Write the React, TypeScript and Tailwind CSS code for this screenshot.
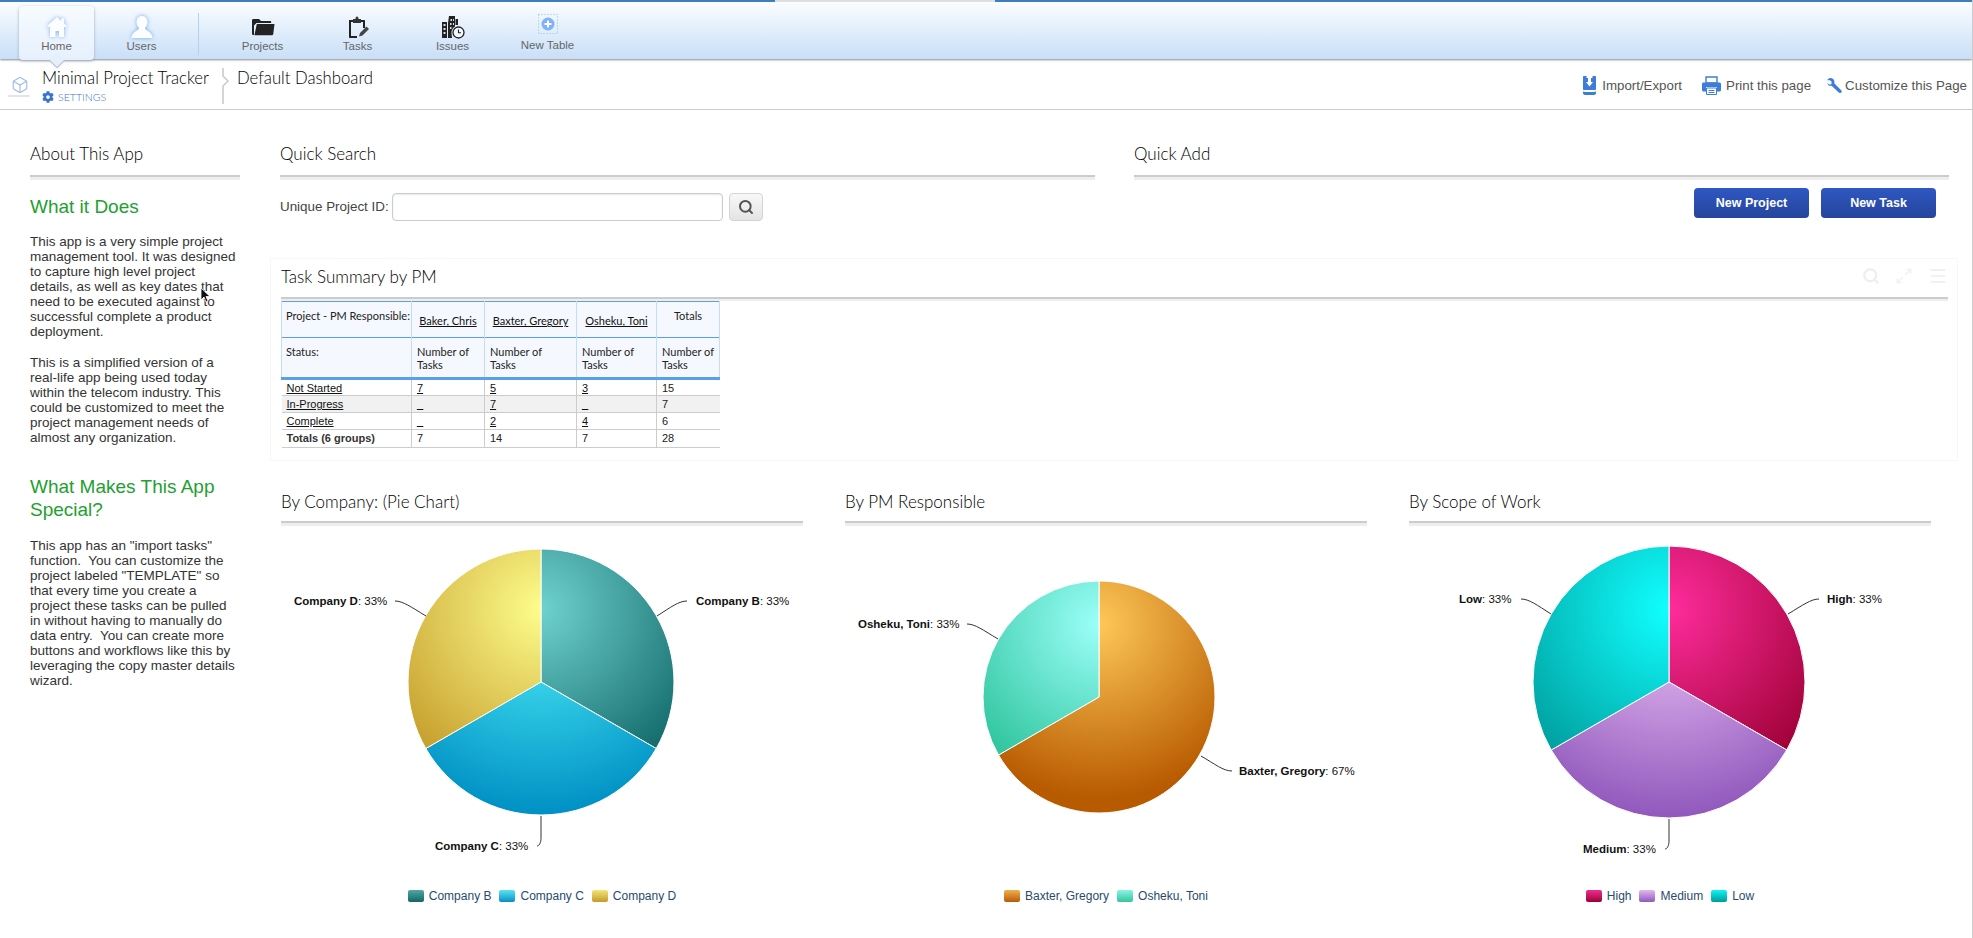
import { Box, Maximize2, Menu, Search } from 'lucide-react'
import { FaCog } from 'react-icons/fa'

type Slice = { from: number; to: number; c0: string; c1: string; gr: number }
type Label = { x: number; y: number; name: string; val: string }
type Chart = {
  title: string
  cx: number
  cy: number
  r: number
  slices: Slice[]
  labels: Label[]
  lines: string[]
  legend: { name: string; swatch: string }[]
}

const charts: Chart[] = [
  {
    title: 'By Company: (Pie Chart)',
    cx: 260,
    cy: 156,
    r: 133,
    slices: [
      { from: 0, to: 120, c0: '#6fd2cf', c1: '#0f6666', gr: 190 },
      { from: 120, to: 240, c0: '#51f3fb', c1: '#0090c4', gr: 206 },
      { from: 240, to: 360, c0: '#fdfd8c', c1: '#c49a28', gr: 190 },
    ],
    labels: [
      { x: 415, y: 79, name: 'Company B', val: '33%' },
      { x: 154, y: 324, name: 'Company C', val: '33%' },
      { x: 13, y: 79, name: 'Company D', val: '33%' },
    ],
    lines: ['M406 75C398 75 390 81 376 90', 'M260 290V312C260 317 258 320 256 320', 'M114 75C122 75 130 81 145 90'],
    legend: [
      { name: 'Company B', swatch: 'from-[#50a8a6] to-[#0f6666]' },
      { name: 'Company C', swatch: 'from-[#55e4f8] to-[#0090c4]' },
      { name: 'Company D', swatch: 'from-[#f4e678] to-[#c49a28]' },
    ],
  },
  {
    title: 'By PM Responsible',
    cx: 254,
    cy: 171,
    r: 116,
    slices: [
      { from: 0, to: 240, c0: '#fdc858', c1: '#b85a00', gr: 175 },
      { from: 240, to: 360, c0: '#9cfffa', c1: '#2ec49c', gr: 165 },
    ],
    labels: [
      { x: 394, y: 249, name: 'Baxter, Gregory', val: '67%' },
      { x: 13, y: 102, name: 'Osheku, Toni', val: '33%' },
    ],
    lines: ['M356 230C370 238 378 245 387 245', 'M122 98C130 98 138 104 153 113'],
    legend: [
      { name: 'Baxter, Gregory', swatch: 'from-[#f0b04c] to-[#b85a00]' },
      { name: 'Osheku, Toni', swatch: 'from-[#88f4e4] to-[#2ec49c]' },
    ],
  },
  {
    title: 'By Scope of Work',
    cx: 260,
    cy: 156,
    r: 136,
    slices: [
      { from: 0, to: 120, c0: '#ff2c9c', c1: '#9c0034', gr: 190 },
      { from: 120, to: 240, c0: '#f2c7f9', c1: '#9058bc', gr: 209 },
      { from: 240, to: 360, c0: '#11ffff', c1: '#009c9c', gr: 190 },
    ],
    labels: [
      { x: 418, y: 77, name: 'High', val: '33%' },
      { x: 174, y: 327, name: 'Medium', val: '33%' },
      { x: 50, y: 77, name: 'Low', val: '33%' },
    ],
    lines: ['M410 73C402 73 394 79 379 88', 'M260 293V315C260 320 258 323 256 323', 'M112 73C120 73 128 79 142 88'],
    legend: [
      { name: 'High', swatch: 'from-[#f02a90] to-[#9c0034]' },
      { name: 'Medium', swatch: 'from-[#e4b8f0] to-[#9058bc]' },
      { name: 'Low', swatch: 'from-[#11f4f4] to-[#009c9c]' },
    ],
  },
]

const whatItDoes = [
  'This app is a very simple project',
  'management tool. It was designed',
  'to capture high level project',
  'details, as well as key dates that',
  'need to be executed against to',
  'successful complete a product',
  'deployment.',
]

const simplified = [
  'This is a simplified version of a',
  'real-life app being used today',
  'within the telecom industry. This',
  'could be customized to meet the',
  'project management needs of',
  'almost any organization.',
]

const special = [
  'This app has an "import tasks"',
  'function.  You can customize the',
  'project labeled "TEMPLATE" so',
  'that every time you create a',
  'project these tasks can be pulled',
  'in without having to manually do',
  'data entry.  You can create more',
  'buttons and workflows like this by',
  'leveraging the copy master details',
  'wizard.',
]

function slicePath(cx: number, cy: number, r: number, from: number, to: number) {
  const p = (deg: number) => {
    const a = ((deg - 90) * Math.PI) / 180
    return `${(cx + r * Math.cos(a)).toFixed(2)} ${(cy + r * Math.sin(a)).toFixed(2)}`
  }
  return `M${cx} ${cy}L${p(from)}A${r} ${r} 0 ${to - from > 180 ? 1 : 0} 1 ${p(to)}Z`
}

function Lines({ lines, className }: { lines: string[]; className: string }) {
  return (
    <p className={`${className} whitespace-pre`}>
      {lines.map(l => (
        <span key={l} className="block">
          {l}
        </span>
      ))}
    </p>
  )
}

function Rule({ band = 'h-[5px]' }: { band?: string }) {
  return <div className={`${band} bg-[#eeeeee] border-t-2 border-[#cccccc]`} />
}

function Heading({ title, children, pb = 'pb-[8px]', band }: { title: string; children?: React.ReactNode; pb?: string; band?: string }) {
  return (
    <div>
      <div className={`flex items-center justify-between ${pb}`}>
        <h2 className="[font-family:Lato,sans-serif] font-light text-[17px] leading-[28px] text-black pt-px -mb-px">{title}</h2>
        {children}
      </div>
      <Rule band={band} />
    </div>
  )
}

function HomeIcon() {
  return (
    <svg width="28" height="24" viewBox="0 0 28 24" className="drop-shadow-[0_0_2px_#7fb0ee]">
      <path d="M14 2 4 11l1.500 1.500L7 11.400V22h5.500v-6h3.500v6H21V11.400l1.500 1.100L24 11l-3-2.700V3.500h-3v2.200z" fill="#fbfdff" strokeLinejoin="round" />
    </svg>
  )
}

function UserIcon() {
  return (
    <svg width="28" height="26" viewBox="0 0 28 26" className="drop-shadow-[0_0_2px_#6ea4ea]">
      <path d="M14 2c-3.500 0-5.500 2.700-5.500 6 0 2.300 1 4.300 2.300 5.500v1.500C10 16.500 4 17.500 3.500 24h21c-.5-6.500-6.500-7.500-7.300-9v-1.500c1.300-1.200 2.300-3.200 2.300-5.500 0-3.300-2-6-5.500-6z" fill="#fbfdff" strokeLinejoin="round" />
    </svg>
  )
}

function FolderIcon() {
  return (
    <svg width="24" height="20" viewBox="0 0 24 20">
      <path d="M1 3.500C1 2.500 1.500 2 2.500 2h5.500l2 2h9c.8 0 1.200.4 1.200 1.200V6H5.500L3 8.500V18H2.500C1.500 18 1 17.500 1 16.500z" fill="#222" />
      <path d="M5.800 7H23.500l-1.300 10.300c-.1.600-.5.900-1.100.9H3.400z" fill="#222" />
    </svg>
  )
}

function TasksIcon() {
  return (
    <svg width="24" height="24" viewBox="0 0 24 24">
      <path d="M3 5h4v2H5v14h6v2H4c-.7 0-1-.4-1-1z" fill="#222" />
      <path d="M14 5h4c.7 0 1 .4 1 1v7h-2V7h-3z" fill="#222" />
      <path d="M7 4h2.500C9.500 2.500 10 1.500 11 1.500S12.500 2.500 12.500 4H15v4H7z" fill="#333" />
      <path d="M13 21.500l1-3.500 6.500-6.500 2.500 2.500-6.500 6.500z" fill="#444" />
    </svg>
  )
}

function IssuesIcon() {
  return (
    <svg width="24" height="24" viewBox="0 0 24 24">
      <path d="M1 7h5v16H1zM8 1h6v10.500c-2.500 1.500-3.700 4-3.500 7l.5 4.500H7V8zM14.500 4H17v6h-2.500z" fill="#222" />
      <path d="M2.500 9h2v2h-2zm0 4h2v2h-2zm0 4h2v2h-2zM9.500 4h1.500v2H9.500zm2.500 0h1v2h-1zM9 8h1.500v2H9zm0 4h1.500v2H9zm3-4h1v2h-1z" fill="#ddd" />
      <circle cx="17.500" cy="17.500" r="5.500" fill="#f4f8fe" stroke="#222" strokeWidth="1.300" />
      <path d="M17.500 14.500v3.300h2.500" fill="none" stroke="#222" strokeWidth="1.100" />
    </svg>
  )
}

function NewTableIcon() {
  return (
    <svg width="20" height="20" viewBox="0 0 20 20">
      <rect x=".5" y=".5" width="19" height="19" fill="none" stroke="#90bcf4" strokeDasharray="1 2" />
      <circle cx="10" cy="10" r="6.500" fill="#7fb2f6" />
      <path d="M10 6.500v7M6.500 10h7" stroke="#fff" strokeWidth="2" />
    </svg>
  )
}

function ImportIcon() {
  return (
    <svg width="13" height="19" viewBox="0 0 13 19">
      <path d="M1 0h2.500v2H5v4H3l3.500 4.500L10 6H8V2h1.500V0H12c.6 0 1 .4 1 1v12c0 .6-.4 1-1 1H1c-.6 0-1-.4-1-1V1c0-.6.4-1 1-1z" fill="#3d7cd9" />
      <path d="M0 15.500c2 .8 11 .8 13 0V17c0 1.300-1 2-2 2H2c-1 0-2-.7-2-2z" fill="#3d7cd9" />
    </svg>
  )
}

function PrintIcon() {
  return (
    <svg width="19" height="19" viewBox="0 0 19 19">
      <path d="M4 1h11v6H4z" fill="none" stroke="#3d7cd9" strokeWidth="1.400" />
      <path d="M1.500 6.500h16c.8 0 1.500.7 1.500 1.500v6c0 .8-.7 1.500-1.500 1.500H15V11H4v4.500H1.500C.7 15.500 0 14.800 0 14V8c0-.8.7-1.500 1.500-1.500z" fill="#3d7cd9" />
      <path d="M4.500 12h10v6.500h-10z" fill="#fff" stroke="#3d7cd9" />
      <path d="M6.500 14.500h6M6.500 16.500h6" stroke="#3d7cd9" />
    </svg>
  )
}

function WrenchIcon() {
  return (
    <svg width="15" height="15" viewBox="0 0 15 15">
      <path d="M4.500.2C2.800-.2 1 .6.300 2.300L3 2.200l1.600 1.600-.2 2.500-2.500.2L.3 5C.4 7 2.300 8.300 4.600 7.700l7.200 6.800c.7.700 2 .7 2.500 0 .6-.7.500-1.700-.1-2.300L7.200 5.200C8 3 6.800.7 4.500.2z" fill="#3d7cd9" />
    </svg>
  )
}

const navItems = [
  { label: 'Projects', icon: <FolderIcon /> },
  { label: 'Tasks', icon: <TasksIcon /> },
  { label: 'Issues', icon: <IssuesIcon /> },
]

const th = 'border-x border-[#c5dcf8] align-top font-normal'
const td = 'border-l border-[#cccccc] pl-[5px] pt-px align-top'
const link = 'underline text-[#111]'

const rows = [
  { name: 'Not Started', vals: ['7', '5', '3'], total: '15', bg: '' },
  { name: 'In-Progress', vals: ['_', '7', '_'], total: '7', bg: 'bg-[#f1f1f1]' },
  { name: 'Complete', vals: ['_', '2', '4'], total: '6', bg: '' },
]

function SummaryTable() {
  return (
    <table className="table-fixed w-[438px] border-collapse text-[#222] [font-family:Lato,sans-serif] text-[11px] leading-[13px]">
      <colgroup>
        <col className="w-[130px]" />
        <col className="w-[73px]" />
        <col className="w-[92px]" />
        <col className="w-[80px]" />
        <col className="w-[63px]" />
      </colgroup>
      <thead className="bg-[#f5f9ff]">
        <tr className="h-[36px] border-y border-[#5a9fee]">
          <th className={`${th} text-left pl-[4px] pt-[7px] whitespace-nowrap`}>Project - PM Responsible:</th>
          {['Baker, Chris', 'Baxter, Gregory', 'Osheku, Toni'].map(n => (
            <th key={n} className={`${th} text-center pt-[12px]`}>
              <span className={link}>{n}</span>
            </th>
          ))}
          <th className={`${th} text-center pt-[7px]`}>Totals</th>
        </tr>
        <tr className="h-[41px] border-b-[3px] border-[#5a9fee]">
          <th className={`${th} text-left pl-[4px] pt-[7px]`}>Status:</th>
          {[0, 1, 2, 3].map(i => (
            <th key={i} className={`${th} text-left pl-[5px] pt-[7px]`}>
              Number of
              <br />
              Tasks
            </th>
          ))}
        </tr>
      </thead>
      <tbody className="[font-family:Liberation_Sans,Arial,sans-serif] text-[11px] leading-[14px]">
        {rows.map(r => (
          <tr key={r.name} className={`h-[17px] border-b border-[#cccccc] ${r.bg}`}>
            <td className="pl-[5px] pt-px align-top">
              <span className={link}>{r.name}</span>
            </td>
            {r.vals.map((v, i) => (
              <td key={i} className={td}>
                <span className={link}>{v}</span>
              </td>
            ))}
            <td className={td}>{r.total}</td>
          </tr>
        ))}
        <tr className="h-[18px] border-b border-[#cccccc]">
          <td className="pl-[5px] pt-px align-top font-bold text-[#333]">Totals (6 groups)</td>
          <td className={td}>7</td>
          <td className={td}>14</td>
          <td className={td}>7</td>
          <td className={td}>28</td>
        </tr>
      </tbody>
    </table>
  )
}

function Pie({ chart, idx }: { chart: Chart; idx: number }) {
  const { cx, cy, r } = chart
  return (
    <div>
      <Heading title={chart.title} pb="pb-[6px]" />
      <svg width="522" height="360" viewBox="0 0 522 360" className="block">
        <defs>
          {chart.slices.map((s, i) => (
            <radialGradient key={i} id={`g${idx}-${i}`} gradientUnits="userSpaceOnUse" cx={cx} cy={cy - 73} r={s.gr}>
              <stop offset="0" stopColor={s.c0} />
              <stop offset="1" stopColor={s.c1} />
            </radialGradient>
          ))}
        </defs>
        {chart.slices.map((s, i) => (
          <path key={i} d={slicePath(cx, cy, r, s.from, s.to)} fill={`url(#g${idx}-${i})`} stroke="#fff" strokeWidth="1" strokeLinejoin="round" />
        ))}
        {chart.lines.map((d, i) => (
          <path key={i} d={d} fill="none" stroke="#333" strokeWidth="1" />
        ))}
        {chart.labels.map(l => (
          <text key={l.name} x={l.x} y={l.y} fontSize="11.500" fill="#111" fontFamily="'Liberation Sans', sans-serif">
            <tspan fontWeight="700">{l.name}</tspan>: {l.val}
          </text>
        ))}
      </svg>
      <div className="h-[20px] flex items-center justify-center gap-[8px]">
        {chart.legend.map(l => (
          <div key={l.name} className="flex items-center gap-[5px]">
            <span className={`w-[16px] h-[12px] rounded-[2px] bg-linear-to-b ${l.swatch}`} />
            <span className="text-[12px] text-[#274b6d]">{l.name}</span>
          </div>
        ))}
      </div>
    </div>
  )
}

export default function App() {
  return (
    <div className="relative w-[1973px] h-[938px] overflow-hidden bg-white [font-family:Liberation_Sans,Arial,sans-serif] border-r border-[#cccccc]">
      <div className="flex h-[2px]">
        <div className="w-[775px] bg-[#3a7ebf]" />
        <div className="w-[220px] bg-linear-to-b from-[#d8d8d8] to-[#eeeeee]" />
        <div className="flex-1 bg-[#3a7ebf]" />
      </div>

      {/* nav */}
      <nav className="relative h-[57px] bg-linear-to-b from-[#fbfdff] to-[#c8dff8] shadow-[0_1px_2px_#8a8a8a] flex pl-[19px] text-[11.5px] text-[#666]">
        <div className="relative z-10 w-[75px] h-[54px] mt-[4px] bg-linear-to-b from-[#f7fbff] to-[#e6f0fd] rounded-[4px] shadow-[0_1px_3px_#9aa6b4] flex flex-col items-center pt-[8px]">
          <div className="h-[25px] flex items-center">
            <HomeIcon />
          </div>
          <span className="leading-[14px]">Home</span>
          <div className="absolute left-[33px] -bottom-[5px] w-[10px] h-[10px] rotate-45 bg-[#e6f0fd] shadow-[1px_1px_1px_#b5bcc6]" />
        </div>
        <div className="w-[75px] ml-[10px] flex flex-col items-center pt-[12px]">
          <div className="h-[25px] flex items-center">
            <UserIcon />
          </div>
          <span className="leading-[14px]">Users</span>
        </div>
        <div className="w-px h-[42px] mt-[11px] ml-[19px] bg-[#b5d0f0]" />
        <div className="flex ml-[16px]">
          {navItems.map(item => (
            <div key={item.label} className="w-[95px] flex flex-col items-center pt-[12px]">
              <div className="h-[25px] flex items-center">{item.icon}</div>
              <span className="leading-[14px]">{item.label}</span>
            </div>
          ))}
          <div className="w-[95px] flex flex-col items-center pt-[12px]">
            <div className="h-[24px] flex items-start">
              <NewTableIcon />
            </div>
            <span className="leading-[14px]">New Table</span>
          </div>
        </div>
      </nav>

      {/* app header */}
      <header className="h-[51px] border-b border-[#cccccc] flex items-start pl-[11px] pr-[5px]">
        <div className="relative mt-[17px] w-[17px]">
          <Box size={18} strokeWidth={1.500} className="text-[#9dbbe8]" />
          <div className="w-[22px] h-[2px] -ml-[3px] mt-[1px] bg-[#e4e4e4] rounded-full" />
        </div>
        <div className="ml-[14px] w-[180px] pt-[8px]">
          <div className="[font-family:Lato,sans-serif] font-light text-[16.7px] leading-[22px] text-black whitespace-nowrap">Minimal Project Tracker</div>
          <div className="flex items-center gap-[4px] mt-[1px]">
            <FaCog size={12} className="text-[#3a72d0]" />
            <span className="[font-family:Lato,sans-serif] font-light text-[10.6px] leading-[14px] text-[#3a72d0]">SETTINGS</span>
          </div>
        </div>
        <svg width="7" height="36" viewBox="0 0 7 36" className="mt-[9px]">
          <path d="M1 0V8L6 13L1 18V36" fill="none" stroke="#c8c8c8" strokeWidth="1.500" />
        </svg>
        <div className="ml-[8px] pt-[8px] [font-family:Lato,sans-serif] font-light text-[16.7px] leading-[22px] text-black">Default Dashboard</div>
        <div className="ml-auto flex items-center mt-[17px] text-[13.3px] text-[#555]">
          <ImportIcon />
          <span className="ml-[6px]">Import/Export</span>
          <span className="ml-[20px] flex">
            <PrintIcon />
          </span>
          <span className="ml-[5px]">Print this page</span>
          <span className="ml-[16px] flex">
            <WrenchIcon />
          </span>
          <span className="ml-[3px]">Customize this Page</span>
        </div>
      </header>

      {/* page body */}
      <main className="flex pl-[30px] pt-[29px] pr-[23px]">
        <aside className="w-[210px] shrink-0 text-[13.5px] leading-[15px] text-[#333]">
          <Heading title="About This App" />
          <h3 className="mt-[15px] text-[19px] leading-[23px] text-[#22a030]">What it Does</h3>
          <Lines lines={whatItDoes} className="mt-[16px]" />
          <Lines lines={simplified} className="mt-[16px]" />
          <h3 className="mt-[30px] text-[19px] leading-[23px] text-[#22a030]">What Makes This App Special?</h3>
          <Lines lines={special} className="mt-[17px]" />
        </aside>

        <div className="ml-[40px] w-[1669px] shrink-0">
          <div className="grid grid-cols-[815px_815px] gap-x-[39px]">
            <div>
              <Heading title="Quick Search" />
              <div className="mt-[13px] flex items-center text-[13.4px] text-[#444]">
                <span>Unique Project ID:</span>
                <input className="ml-[3px] w-[331px] h-[28px] bg-white border border-[#cccccc] rounded-[4px] shadow-[inset_0_1px_2px_#e8e8e8]" />
                <button className="ml-[6px] w-[34px] h-[28px] flex items-center justify-center rounded-[4px] bg-linear-to-b from-[#f8f8f8] to-[#e4e4e4] border border-[#d4d4d4]">
                  <Search size={16} strokeWidth={3} className="text-[#555]" />
                </button>
              </div>
            </div>
            <div>
              <Heading title="Quick Add" />
              <div className="mt-[8px] pr-[13px] flex justify-end gap-[12px]">
                <button className="w-[115px] h-[30px] pt-px rounded-[4px] bg-linear-to-b from-[#2f58c2] to-[#25449c] text-white text-[12.5px] font-bold">New Project</button>
                <button className="w-[115px] h-[30px] pt-px rounded-[4px] bg-linear-to-b from-[#2f58c2] to-[#25449c] text-white text-[12.5px] font-bold">New Task</button>
              </div>
            </div>
          </div>

          <section className="-ml-[10px] mt-[37px] w-[1688px] border border-[#f7f7f7] pl-[10px] pr-[9px] pt-[3px] pb-[12px]">
            <Heading title="Task Summary by PM" pb="pb-[7px]" band="h-[4px]">
              <div className="flex items-center gap-[15px] text-[#eeeeee]">
                <Search size={18} strokeWidth={3} />
                <Maximize2 size={18} strokeWidth={1.500} />
                <Menu size={20} strokeWidth={2} />
              </div>
            </Heading>
            <SummaryTable />
          </section>

          <div className="ml-px mt-[26px] grid grid-cols-[522px_522px_522px] gap-x-[42px]">
            {charts.map((c, i) => (
              <Pie key={c.title} chart={c} idx={i} />
            ))}
          </div>
        </div>
      </main>

      {/* mouse pointer caught in the capture */}
      <svg width="11" height="16" viewBox="0 0 11 16" className="absolute left-[200px] top-[287px]">
        <path d="M1 1v12l3-3 2 5 2-1-2-4.500h4z" fill="#111" stroke="#fff" strokeWidth=".8" />
      </svg>
    </div>
  )
}
